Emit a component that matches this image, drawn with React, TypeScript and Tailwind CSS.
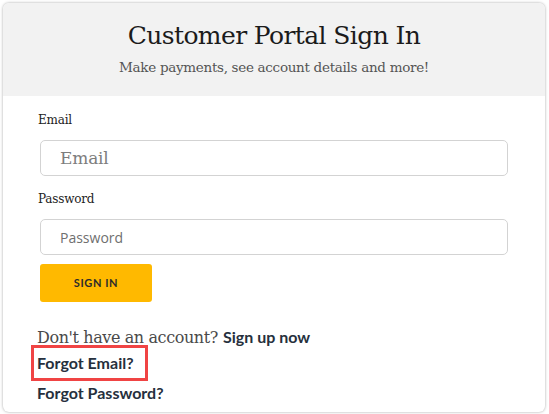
export default function App() {
  return (
    <div className="w-[549px] h-[414px] bg-white pl-[3px] pt-[3px]">
      <div className="w-[542px] h-[409px] rounded-md bg-white shadow-[0_0_3px_rgba(0,0,0,0.35)] overflow-hidden">
        {/* header */}
        <div className="h-[93px] bg-[#f2f2f2] flex flex-col items-center pt-[16px]">
          <h1 className="font-['DejaVu_Serif',serif] text-[25px] leading-[33px] tracking-[-0.6px] text-[#1b1b1b]">
            Customer Portal Sign In
          </h1>
          <p className="mt-[6px] font-['DejaVu_Serif',serif] text-[13.5px] leading-[18px] tracking-[-0.3px] text-[#555]">
            Make payments, see account details and more!
          </p>
        </div>

        {/* form */}
        <div className="pl-[37px] pr-[37px] pt-[16px]">
          <label className="-ml-[2px] block font-['DejaVu_Serif',serif] text-[12px] leading-[16px] tracking-[-0.2px] text-[#222]">
            Email
          </label>
          <input
            placeholder="Email"
            className="mt-[12px] block w-[468px] h-[36px] rounded-[5px] border border-[#d3d3d3] bg-white pl-[19px] font-['DejaVu_Serif',serif] text-[17px] tracking-[-0.2px] placeholder:text-[#7d7d7d] outline-none"
          />
          <label className="-ml-[2px] mt-[15px] block font-['DejaVu_Serif',serif] text-[12px] leading-[16px] tracking-[-0.2px] text-[#222]">
            Password
          </label>
          <input
            placeholder="Password"
            className="mt-[12px] block w-[468px] h-[36px] rounded-[5px] border border-[#d3d3d3] bg-white pl-[19px] font-['Open_Sans',sans-serif] text-[14px] placeholder:text-[#6f6f6f] outline-none"
          />
          <button className="mt-[9px] w-[112px] h-[38px] rounded-[3px] bg-[#ffb900] font-['Lato',sans-serif] font-bold text-[11px] tracking-[0.6px] text-[#2b2b2b]">
            SIGN IN
          </button>

          <div className="-ml-[3px] mt-[25px] flex items-baseline gap-[5px] leading-[20px]">
            <span className="font-['DejaVu_Serif',serif] text-[16px] tracking-[-0.4px] text-[#4a4a4a]">
              Don't have an account?
            </span>
            <a className="font-['Lato',sans-serif] font-bold text-[16px] text-[#26303d]">Sign up now</a>
          </div>
          <div className="-mt-[3px] -ml-[9px] w-[117px] h-[36px] border-[3px] border-[#f04444] pl-[3px] flex items-center">
            <a className="font-['Lato',sans-serif] font-bold text-[16px] leading-[20px] text-[#26303d]">Forgot Email?</a>
          </div>
          <div className="-ml-[3px] mt-[2px] font-['Lato',sans-serif] font-bold text-[16px] leading-[20px] text-[#26303d]">
            Forgot Password?
          </div>
        </div>
      </div>
    </div>
  );
}
